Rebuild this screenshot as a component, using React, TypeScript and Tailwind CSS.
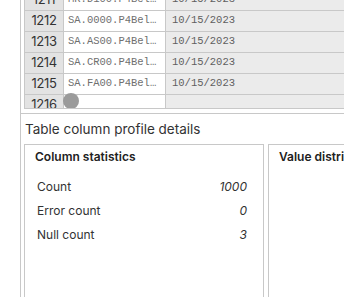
const rows = [
  { n: 1211, id: "MR.D100.P4Bel…", date: "10/15/2023" },
  { n: 1212, id: "SA.0000.P4Bel…", date: "10/15/2023" },
  { n: 1213, id: "SA.AS00.P4Bel…", date: "10/15/2023" },
  { n: 1214, id: "SA.CR00.P4Bel…", date: "10/15/2023" },
  { n: 1215, id: "SA.FA00.P4Bel…", date: "10/15/2023" },
  { n: 1216, id: "", date: "" },
]

const stats = [
  { label: "Count", value: "1000" },
  { label: "Error count", value: "0" },
  { label: "Null count", value: "3" },
]

export default function App() {
  return (
    <div className="h-[297px] overflow-hidden bg-white font-['Inter',sans-serif]">
      <div className="ml-5 h-full border-l border-[#c8c8c8]">
        {/* Grid preview (scrolled, top row clipped) */}
        <div className="border-b border-[#c8c8c8] pb-1 pl-[3px]">
          <div className="relative h-[109px] overflow-hidden border-b border-[#c8c8c8]">
            <div className="-mt-[10px]">
              {rows.map((r) => (
                <div key={r.n} className="flex h-[21px] border-b border-[#c8c8c8]">
                  <div className="flex w-[40px] shrink-0 items-center justify-center border-x border-[#c8c8c8] bg-[#e3e3e3] text-[13px] tracking-[-0.3px] text-[#333]">
                    {r.n}
                  </div>
                  <div className="flex w-[102px] shrink-0 items-center border-r border-[#c8c8c8] bg-white pl-1 font-['Liberation_Mono',monospace] text-[10.5px] text-[#6f6f6f]">
                    {r.id}
                  </div>
                  <div className="flex flex-1 items-center bg-[#ebebeb] pl-[6px] font-['Liberation_Mono',monospace] text-[10.5px] text-[#5f5f5f]">
                    {r.date}
                  </div>
                </div>
              ))}
            </div>
            <div className="absolute left-[39px] top-[93px] h-4 w-4 rounded-full bg-[#9b9b9b]" />
          </div>
        </div>

        {/* Profile details */}
        <div className="pl-1 pt-[6px] text-[13.5px] leading-[18px] text-[#333]">
          Table column profile details
        </div>
        <div className="mt-[6px] flex h-[200px] gap-1 pl-[3px]">
          <div className="w-[240px] shrink-0 border border-[#c8c8c8] pl-[10px] pr-4 pt-1">
            <div className="text-[12px] font-semibold leading-4 text-[#222]">Column statistics</div>
            <div className="mt-[10px]">
              {stats.map((s) => (
                <div key={s.label} className="flex h-6 items-center justify-between pl-[2px] text-[12px] text-[#333]">
                  <span>{s.label}</span>
                  <span className="italic">{s.value}</span>
                </div>
              ))}
            </div>
          </div>
          <div className="flex-1 border border-[#c8c8c8] pl-[10px] pt-1">
            <div className="whitespace-nowrap text-[12px] font-semibold leading-4 text-[#222]">
              Value distribution
            </div>
          </div>
        </div>
      </div>
    </div>
  )
}
